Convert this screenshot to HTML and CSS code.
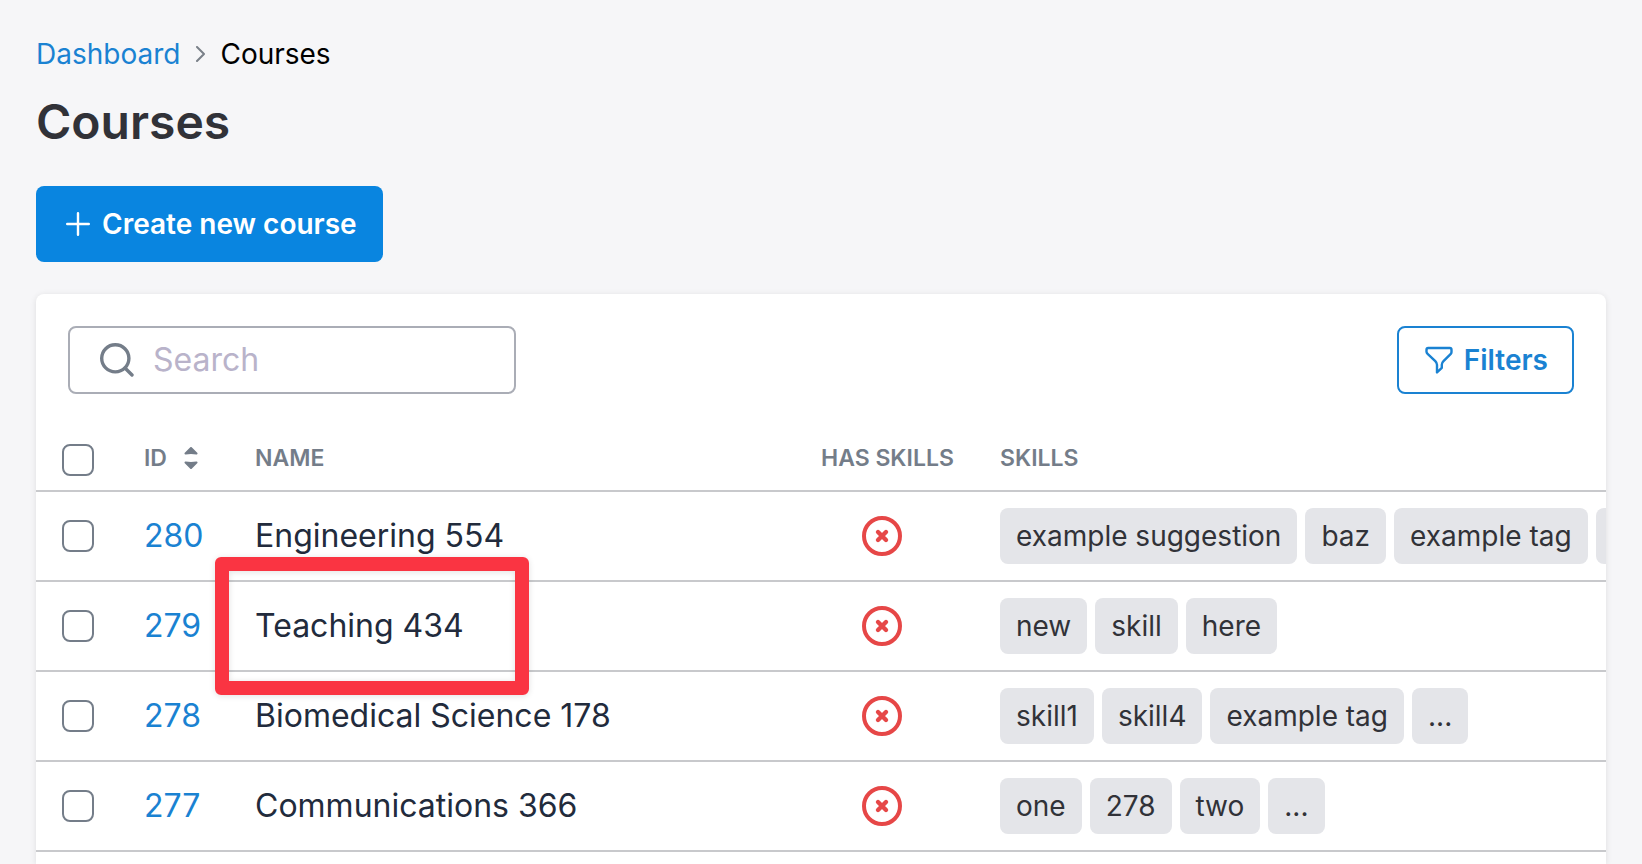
FILE: index.html
```html
<!DOCTYPE html>
<html lang="en">
<head>
    <meta charset="UTF-8">
    <meta name="viewport" content="width=device-width, initial-scale=1.0">
    <title>Courses</title>
    <link rel="stylesheet" href="styles.css">
</head>
<body>
    <!-- Shared icons -->
    <svg class="sprite" aria-hidden="true">
        <symbol id="icon-cross" viewBox="0 0 40 40">
            <circle cx="20" cy="20" r="18" fill="none" stroke="currentColor" stroke-width="4"/>
            <path d="M16 16l8 8M24 16l-8 8" fill="none" stroke="currentColor" stroke-width="4.4" stroke-linecap="round"/>
        </symbol>
    </svg>

    <nav class="breadcrumb">
        <a href="#">Dashboard</a>
        <svg class="chevron" width="10" height="16" viewBox="0 0 10 16"><path d="M2 1l7 7-7 7" fill="none" stroke="currentColor" stroke-width="2" stroke-linecap="round" stroke-linejoin="round"/></svg>
        <span>Courses</span>
    </nav>

    <h1>Courses</h1>

    <button type="button" class="btn btn-primary">
        <svg width="24" height="24" viewBox="0 0 24 24"><path d="M12 1.2v21.6M1.2 12h21.6" fill="none" stroke="currentColor" stroke-width="2.4" stroke-linecap="round"/></svg>
        Create new course
    </button>

    <main class="card">
        <div class="toolbar">
            <label class="search">
                <svg width="34" height="34" viewBox="0 0 34 34"><circle cx="15.3" cy="15.3" r="13.6" fill="none" stroke="currentColor" stroke-width="3.4"/><path d="M25 25l7 7" fill="none" stroke="currentColor" stroke-width="3.4" stroke-linecap="round"/></svg>
                <input type="search" placeholder="Search" aria-label="Search">
            </label>
            <button type="button" class="btn btn-outline">
                <svg width="28" height="28" viewBox="0 0 28 28"><path d="M3.2 2h21.6q1.7 0 1.7 1.7v2.4q0 1-.7 1.7l-7.3 7.3q-1.7 1.7-1.7 3.6v3.1L12 26.4v-7.6q0-2-1.7-3.7L2.6 7.8q-1.1-1-1.1-2V3.7Q1.500 2 3.200 2z" fill="none" stroke="currentColor" stroke-width="2.4" stroke-linejoin="round"/></svg>
                Filters
            </button>
        </div>

        <table class="courses">
            <thead>
                <tr>
                    <th class="col-check"><input type="checkbox" aria-label="Select all"></th>
                    <th class="col-id">
                        <span class="sort">ID
                            <svg width="14" height="22" viewBox="0 0 14 22"><path d="M7 1l5.500 5.500q-5.500-1-11 0zM7 21l5.500-5.500q-5.500 1-11 0z" fill="currentColor" stroke="currentColor" stroke-width="2" stroke-linejoin="round"/></svg>
                        </span>
                    </th>
                    <th class="col-name">NAME</th>
                    <th class="col-has">HAS SKILLS</th>
                    <th class="col-skills">SKILLS</th>
                </tr>
            </thead>
            <tbody>
                <tr>
                    <td class="col-check"><input type="checkbox" aria-label="Select 280"></td>
                    <td class="col-id"><a href="#">280</a></td>
                    <td class="col-name">Engineering 554</td>
                    <td class="col-has"><svg class="cross" role="img" aria-label="No"><use href="#icon-cross"/></svg></td>
                    <td class="col-skills">
                        <div class="tags"><span>example suggestion</span><span>baz</span><span>example tag</span><span>...</span></div>
                    </td>
                </tr>
                <tr>
                    <td class="col-check"><input type="checkbox" aria-label="Select 279"></td>
                    <td class="col-id"><a href="#">279</a></td>
                    <td class="col-name">Teaching 434<div class="highlight"></div></td>
                    <td class="col-has"><svg class="cross" role="img" aria-label="No"><use href="#icon-cross"/></svg></td>
                    <td class="col-skills">
                        <div class="tags"><span>new</span><span>skill</span><span>here</span></div>
                    </td>
                </tr>
                <tr>
                    <td class="col-check"><input type="checkbox" aria-label="Select 278"></td>
                    <td class="col-id"><a href="#">278</a></td>
                    <td class="col-name">Biomedical Science 178</td>
                    <td class="col-has"><svg class="cross" role="img" aria-label="No"><use href="#icon-cross"/></svg></td>
                    <td class="col-skills">
                        <div class="tags"><span>skill1</span><span>skill4</span><span>example tag</span><span>...</span></div>
                    </td>
                </tr>
                <tr>
                    <td class="col-check"><input type="checkbox" aria-label="Select 277"></td>
                    <td class="col-id"><a href="#">277</a></td>
                    <td class="col-name">Communications 366</td>
                    <td class="col-has"><svg class="cross" role="img" aria-label="No"><use href="#icon-cross"/></svg></td>
                    <td class="col-skills">
                        <div class="tags"><span>one</span><span>278</span><span>two</span><span>...</span></div>
                    </td>
                </tr>
            </tbody>
        </table>
    </main>
</body>
</html>
```
FILE: styles.css
```css
* {
    box-sizing: border-box;
}
body {
    margin: 0;
    padding: 34px 36px 0;
    min-height: 100vh;
    display: flex;
    flex-direction: column;
    align-items: flex-start;
    background-color: #f6f6f8;
    font-family: Inter, sans-serif;
    font-size: 28px;
    line-height: 40px;
    color: #000;
}
a {
    color: #1a82d2;
    text-decoration: none;
}
svg {
    flex: none;
}
.sprite {
    position: absolute;
    width: 0;
    height: 0;
}
.breadcrumb {
    display: flex;
    align-items: center;
    gap: 15px;
}
.chevron {
    color: #7a8089;
}
h1 {
    margin: 18px 0 34px;
    font-size: 48px;
    line-height: 60px;
    font-weight: 600;
    color: #313238;
}

/* Buttons */
.btn {
    display: flex;
    align-items: center;
    gap: 12px;
    border-radius: 8px;
    font: 600 28px/40px Inter, sans-serif;
    cursor: pointer;
}
.btn-primary {
    height: 76px;
    padding: 0 26px 0 30px;
    border: none;
    background-color: #0985e0;
    color: #fff;
}
.btn-outline {
    height: 68px;
    padding: 0 24px 0 26px;
    gap: 11px;
    border: 2px solid #1a82d2;
    background-color: #fff;
    color: #1a82d2;
}

.card {
    flex: 1;
    width: 100%;
    margin-top: 32px;
    overflow: hidden;
    background-color: #fff;
    border-radius: 8px 8px 0 0;
    box-shadow: 0 1px 6px rgba(0, 0, 0, 0.1);
}
.toolbar {
    display: flex;
    justify-content: space-between;
    padding: 32px;
}
.search {
    display: flex;
    align-items: center;
    gap: 19px;
    width: 448px;
    height: 68px;
    padding: 0 30px;
    border: 2px solid #aaadb6;
    border-radius: 8px;
    color: #747d89;
}
.search input {
    flex: 1;
    min-width: 0;
    padding: 0;
    border: none;
    outline: none;
    background: none;
    font: 32px/40px Inter, sans-serif;
}
.search input::placeholder {
    color: #b9b3ca;
    opacity: 1;
}

/* Courses table */
.courses {
    width: 100%;
    table-layout: fixed;
    border-collapse: separate;
    border-spacing: 0;
}
.courses th,
.courses td {
    padding: 0 24px;
    border-bottom: 2px solid #c8c9cc;
    text-align: left;
    white-space: nowrap;
}
.courses th {
    height: 66px;
    font-size: 23px;
    line-height: 32px;
    font-weight: 600;
    color: #747d89;
}
.courses td {
    height: 90px;
    font-size: 32px;
    color: #222b3c;
}
.courses .col-check {
    width: 84px;
    padding: 0 26px;
}
.courses th.col-check {
    padding-bottom: 14px;
    vertical-align: bottom;
}
.courses .col-id {
    width: 111px;
    padding-right: 0;
}
.courses .col-has {
    width: 179px;
}
.courses .col-skills {
    width: 630px;
    padding-right: 0;
    overflow: hidden;
}
.courses td.col-has {
    padding-left: 65px;
}
.courses td.col-name {
    position: relative;
}
.courses input {
    display: block;
    appearance: none;
    width: 32px;
    height: 32px;
    margin: 0;
    border: 2px solid #747d89;
    border-radius: 8px;
    background-color: #fff;
}
.courses input:checked {
    background-color: #1a82d2;
}
.sort {
    display: flex;
    align-items: center;
    gap: 17px;
}
.cross {
    display: block;
    width: 40px;
    height: 40px;
    color: #e64747;
}
.tags {
    display: flex;
    gap: 8px;
}
.tags span {
    flex: none;
    padding: 8px 16px;
    border-radius: 8px;
    background-color: #e4e5e9;
    font-size: 28px;
    color: #313238;
}
/* Red marker round the course name */
.highlight {
    position: absolute;
    top: -25px;
    left: -16px;
    width: 314px;
    height: 138px;
    border: 14px solid #fa3442;
    border-radius: 6px;
    box-shadow: 0 1px 6px rgba(0, 0, 0, 0.12), inset 0 1px 6px rgba(0, 0, 0, 0.12);
    pointer-events: none;
    z-index: 1;
}
```
